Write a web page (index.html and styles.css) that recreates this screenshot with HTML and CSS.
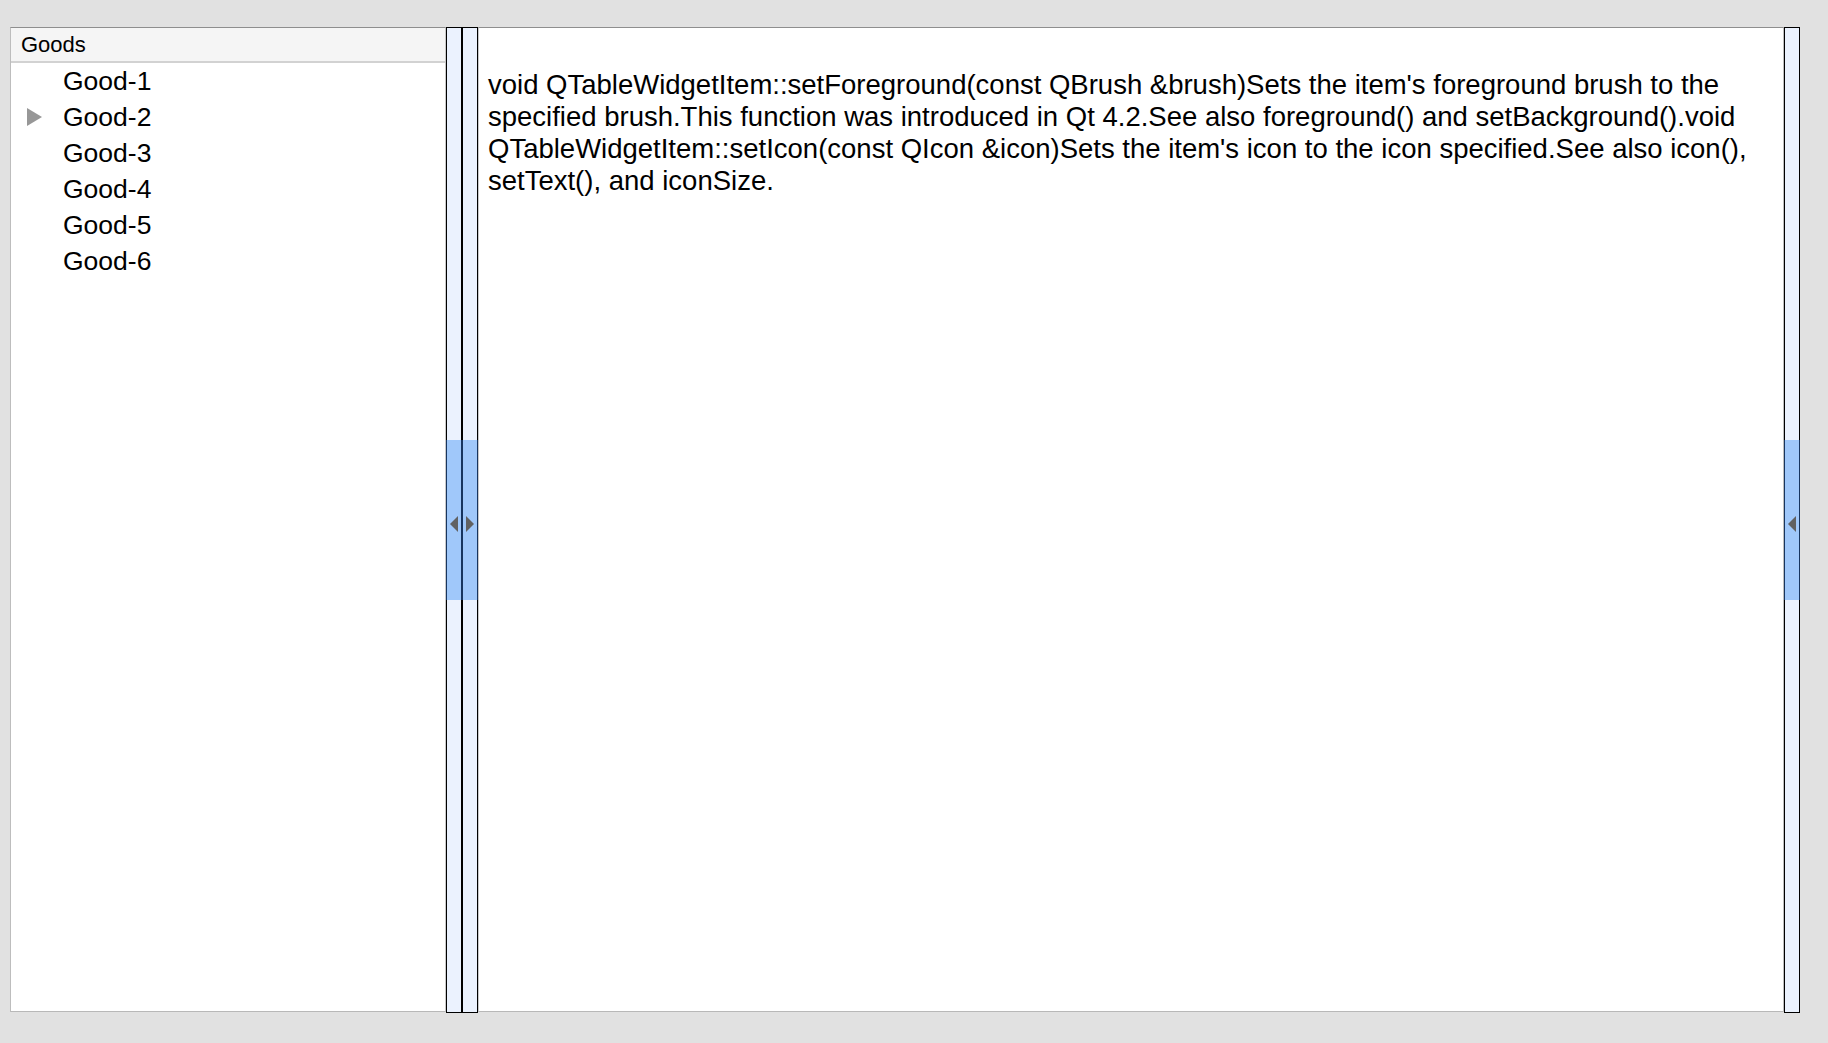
FILE: index.html
```html
<!DOCTYPE html>
<html>
<head>
<meta charset="utf-8">
<link rel="stylesheet" href="styles.css">
</head>
<body>
<div class="window">
  <div class="tree">
    <div class="tree-header">Goods</div>
    <div class="tree-body">
      <div class="row"><span class="branch"></span><span class="label">Good-1</span></div>
      <div class="row"><span class="branch"><svg width="15" height="18" viewBox="0 0 15 18"><polygon points="0,0 15,9 0,18" fill="#979797"/></svg></span><span class="label">Good-2</span></div>
      <div class="row"><span class="branch"></span><span class="label">Good-3</span></div>
      <div class="row"><span class="branch"></span><span class="label">Good-4</span></div>
      <div class="row"><span class="branch"></span><span class="label">Good-5</span></div>
      <div class="row"><span class="branch"></span><span class="label">Good-6</span></div>
    </div>
  </div>
  <div class="handle"><div class="grip"><span class="arrow left"></span></div></div>
  <div class="handle"><div class="grip"><span class="arrow right"></span></div></div>
  <div class="editor">
    <p class="doc">void QTableWidgetItem::setForeground(const QBrush &amp;brush)Sets the item's foreground brush to the specified brush.This function was introduced in Qt 4.2.See also foreground() and setBackground().void QTableWidgetItem::setIcon(const QIcon &amp;icon)Sets the item's icon to the icon specified.See also icon(), setText(), and iconSize.</p>
  </div>
  <div class="handle"><div class="grip"><span class="arrow left"></span></div></div>
</div>
</body>
</html>
```
FILE: styles.css
```css
html, body {
  margin: 0;
  padding: 0;
  height: 100%;
}
body {
  background: #e1e1e1;
  font-family: "Liberation Sans", Arial, sans-serif;
  color: #000;
}
.window {
  display: flex;
  align-items: flex-start;
  padding: 27px 0 0 10px;
  height: 985px;
}
.tree {
  width: 434px;
  height: 983px;
  background: #fff;
  border-top: 1px solid #8e8e8e;
  border-left: 1px solid #bdbdbd;
  border-right: 1px solid #c8c8c8;
  border-bottom: 1px solid #b8b8b8;
  display: flex;
  flex-direction: column;
}
.tree-header {
  height: 33px;
  background: #f5f5f5;
  border-bottom: 2px solid #d2d2d2;
  font-size: 22px;
  line-height: 34px;
  padding-left: 10px;
}
.row {
  height: 36px;
  display: flex;
  align-items: center;
  font-size: 26.5px;
}
.branch {
  width: 52px;
  padding-left: 16px;
  box-sizing: border-box;
  display: flex;
  align-items: center;
}
.label {
  line-height: 36px;
}
.handle {
  width: 14px;
  height: 984px;
  background: #ebf2fe;
  border: 1px solid #000;
  display: flex;
  flex-direction: column;
  justify-content: center;
}
.grip {
  height: 160px;
  box-sizing: border-box;
  padding-top: 8px;
  margin: 0 -1px;
  background: #a0c8fa;
  border-left: 1px solid #17355f;
  border-right: 1px solid #17355f;
  display: flex;
  align-items: center;
  justify-content: center;
}
.arrow {
  width: 0;
  height: 0;
  border-top: 8px solid transparent;
  border-bottom: 8px solid transparent;
}
.arrow.left {
  border-right: 8px solid #616161;
}
.arrow.right {
  border-left: 8px solid #616161;
}
.editor {
  width: 1304px;
  height: 983px;
  background: #fff;
  border-top: 1px solid #8e8e8e;
  border-left: 1px solid #c8c8c8;
  border-right: 1px solid #bdbdbd;
  border-bottom: 1px solid #b8b8b8;
}
.doc {
  margin: 0;
  padding: 41px 10px 0 9px;
  font-size: 27.5px;
  line-height: 32px;
}
```
